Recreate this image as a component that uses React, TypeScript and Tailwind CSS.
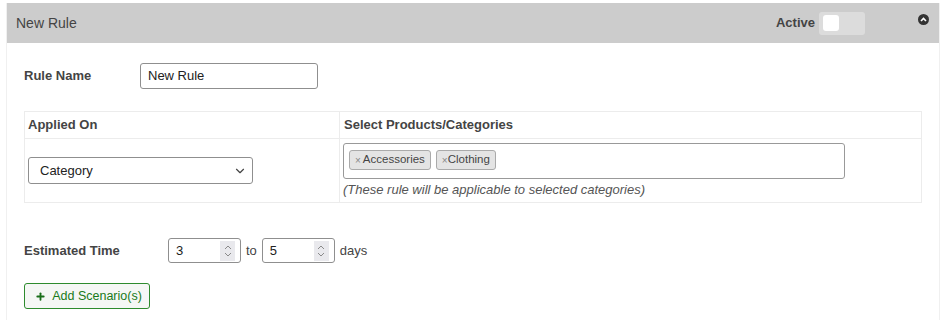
import { ChevronDown, Plus } from 'lucide-react'

function Spinner() {
  return (
    <div className="flex h-[20px] w-[15px] flex-col items-center justify-center bg-[#e9e9ed]">
      <svg width="8" height="14" viewBox="0 0 8 14" fill="none" stroke="#8a8a8a" strokeWidth="1">
        <path d="M1 5 L4 2 L7 5" />
        <path d="M1 9 L4 12 L7 9" />
      </svg>
    </div>
  )
}

function NumberBox({ value }: { value: string }) {
  return (
    <div className="flex h-[25px] w-[73px] items-center justify-between rounded-[3px] border border-[#8f8f8f] pl-[7px] pr-[5px] text-[13px] text-[#222]">
      <span>{value}</span>
      <Spinner />
    </div>
  )
}

export default function App() {
  return (
    <div className="h-[320px] w-[947px] bg-white pl-[6px] pt-[3px] pr-[7px] font-['Liberation_Sans',Arial,sans-serif] text-[13px] text-[#333]">
      <div className="h-full border-x border-[#f0f0f0]">
        <div className="flex h-[40px] items-center bg-[#cccccc] pl-[9px] pr-[10px]">
          <span className="text-[14px] text-[#444]">New Rule</span>
          <div className="ml-auto flex items-center">
            <span className="text-[13px] font-bold text-[#444]">Active</span>
            <div className="ml-[4px] flex h-[23px] w-[46px] items-center rounded-[3px] bg-[#dcdcdc] pl-[4px]">
              <div className="h-[16px] w-[16px] rounded-[3px] bg-white" />
            </div>
          </div>
          <div className="ml-[53px] mt-[-8px] flex h-[11px] w-[11px] items-center justify-center rounded-full bg-[#333]">
            <svg width="7" height="5" viewBox="0 0 7 5" fill="none" stroke="white" strokeWidth="1.6">
              <path d="M1 4 L3.5 1.5 L6 4" />
            </svg>
          </div>
        </div>

        <div className="px-[17px]">
          <div className="flex items-center pt-[20px]">
            <span className="w-[116px] font-bold text-[#444]">Rule Name</span>
            <div className="flex h-[26px] w-[178px] items-center rounded-[3px] border border-[#8f8f8f] px-[7px] text-[13px] text-[#222]">
              New Rule
            </div>
          </div>

          <div className="mt-[22px] grid grid-cols-[315px_1fr] border border-[#ececec]">
            <div className="flex h-[27px] items-center border-r border-b border-[#ececec] pl-[3px] font-bold text-[#444]">
              Applied On
            </div>
            <div className="flex h-[27px] items-center border-b border-[#ececec] pl-[4px] font-bold text-[#444]">
              Select Products/Categories
            </div>
            <div className="flex h-[63px] items-center border-r border-[#ececec] pl-[3px]">
              <div className="flex h-[27px] w-[225px] items-center justify-between rounded-[3px] border border-[#8f8f8f] pl-[11px] pr-[5px] text-[13px] text-[#222]">
                <span>Category</span>
                <ChevronDown size={14} strokeWidth={2} color="#444" />
              </div>
            </div>
            <div className="pl-[3px] pt-[4px]">
              <div className="flex h-[36px] w-[502px] items-center gap-[5px] rounded-[3px] border border-[#999] px-[5px] pb-[2px]">
                <span className="flex h-[20px] items-center rounded-[3px] border border-[#aaa] bg-[#e4e4e4] px-[5px] text-[11.5px] text-[#444]">
                  <span className="mr-[2px] text-[10px] text-[#888]">×</span>Accessories
                </span>
                <span className="flex h-[20px] items-center rounded-[3px] border border-[#aaa] bg-[#e4e4e4] px-[5px] text-[11.5px] text-[#444]">
                  <span className="text-[10px] text-[#888]">×</span>Clothing
                </span>
              </div>
              <div className="mt-[1px] text-[13px] italic text-[#555]">
                (These rule will be applicable to selected categories)
              </div>
            </div>
          </div>

          <div className="mt-[35px] flex items-center">
            <span className="w-[144px] font-bold text-[#444]">Estimated Time</span>
            <NumberBox value="3" />
            <span className="mx-[5px] text-[#444]">to</span>
            <NumberBox value="5" />
            <span className="ml-[5px] text-[#444]">days</span>
          </div>

          <button className="mt-[20px] flex h-[26px] w-[126px] items-center justify-center gap-[6px] rounded-[3px] border border-[#2e8b2e] bg-[#f5f7f5] pl-[3px] text-[12.5px] text-[#1a7a1a]">
            <Plus size={11} strokeWidth={4} color="#1a6e1a" />
            Add Scenario(s)
          </button>
        </div>
      </div>
    </div>
  )
}
